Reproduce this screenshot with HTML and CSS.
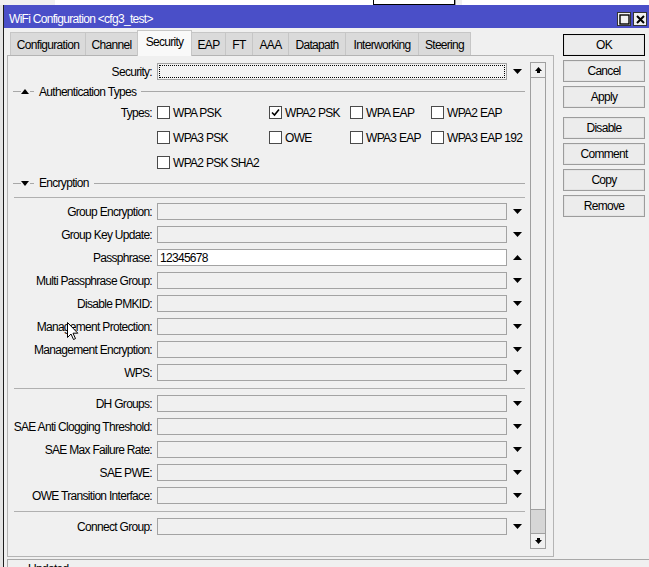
FILE: index.html
```html
<!DOCTYPE html>
<html>
<head>
<meta charset="utf-8">
<title>WiFi Configuration</title>
<link rel="stylesheet" href="styles.css">
</head>
<body>
<div class="topstrip">
  <div class="ts-gray"></div>
  <div class="ts-white"></div>
  <div class="ts-box"></div>
  <div class="ts-gray2"></div>
  <div class="ts-white2"></div>
</div>
<div class="desk">
  <div class="gutter"></div>
  <div class="window">
    <div class="titlebar">
      <span class="title">WiFi Configuration &lt;cfg3_test&gt;</span>
      <div class="tbtns">
        <span class="tbtn"><svg width="11" height="11" viewBox="0 0 11 11"><rect x="1" y="1" width="9" height="9" fill="none" stroke="#000" stroke-width="1.4"/></svg></span>
        <span class="tbtn"><svg width="11" height="11" viewBox="0 0 11 11"><path d="M2 2 L9 9 M9 2 L2 9" stroke="#000" stroke-width="2"/></svg></span>
      </div>
    </div>
    <div class="main">
      <div class="left">
        <div class="tabs">
          <div class="tab w-conf">Configuration</div>
          <div class="tab w-chan">Channel</div>
          <div class="tab active w-sec">Security</div>
          <div class="tab w-eap">EAP</div>
          <div class="tab w-ft">FT</div>
          <div class="tab w-aaa">AAA</div>
          <div class="tab w-dp">Datapath</div>
          <div class="tab w-iw">Interworking</div>
          <div class="tab w-st">Steering</div>
        </div>
        <div class="panel">
          <div class="content">
            <div class="row">
              <div class="label">Security:</div>
              <div class="field focus"><div class="dots"></div></div>
              <div class="arrow"><svg width="9" height="5" viewBox="0 0 9 5"><polygon points="0,0 9,0 4.5,5" fill="#000"/></svg></div>
            </div>

            <div class="sechead">
              <span class="hl-a"></span>
              <svg class="tri" width="8" height="5" viewBox="0 0 8 5"><polygon points="0,5 8,5 4,0" fill="#000"/></svg>
              <span class="hl-b"></span>
              <span class="htext">Authentication Types</span>
              <span class="hl-c"></span>
            </div>

            <div class="typesrow">
              <div class="label">Types:</div>
              <div class="checks">
                <label class="chk"><span class="box"></span>WPA PSK</label>
                <label class="chk"><span class="box"><svg width="9" height="9" viewBox="0 0 9 9"><path d="M1 4.5 L3.5 7 L8 1.5" fill="none" stroke="#000" stroke-width="1.6"/></svg></span>WPA2 PSK</label>
                <label class="chk"><span class="box"></span>WPA EAP</label>
                <label class="chk"><span class="box"></span>WPA2 EAP</label>
              </div>
            </div>
            <div class="typesrow">
              <div class="label"></div>
              <div class="checks">
                <label class="chk"><span class="box"></span>WPA3 PSK</label>
                <label class="chk"><span class="box"></span>OWE</label>
                <label class="chk"><span class="box"></span>WPA3 EAP</label>
                <label class="chk"><span class="box"></span>WPA3 EAP 192</label>
              </div>
            </div>
            <div class="typesrow">
              <div class="label"></div>
              <div class="checks">
                <label class="chk"><span class="box"></span>WPA2 PSK SHA2</label>
              </div>
            </div>

            <div class="sechead enc">
              <span class="hl-a"></span>
              <svg class="tri" width="8" height="5" viewBox="0 0 8 5"><polygon points="0,0 8,0 4,5" fill="#000"/></svg>
              <span class="hl-b"></span>
              <span class="htext">Encryption</span>
              <span class="hl-c"></span>
            </div>
            <div class="sep first"></div>

            <div class="row"><div class="label">Group Encryption:</div><div class="field"></div><div class="arrow"><svg width="9" height="5" viewBox="0 0 9 5"><polygon points="0,0 9,0 4.5,5" fill="#000"/></svg></div></div>
            <div class="row"><div class="label">Group Key Update:</div><div class="field"></div><div class="arrow"><svg width="9" height="5" viewBox="0 0 9 5"><polygon points="0,0 9,0 4.5,5" fill="#000"/></svg></div></div>
            <div class="row"><div class="label">Passphrase:</div><div class="field white">12345678</div><div class="arrow"><svg width="9" height="5" viewBox="0 0 9 5"><polygon points="0,5 9,5 4.5,0" fill="#000"/></svg></div></div>
            <div class="row"><div class="label">Multi Passphrase Group:</div><div class="field"></div><div class="arrow"><svg width="9" height="5" viewBox="0 0 9 5"><polygon points="0,0 9,0 4.5,5" fill="#000"/></svg></div></div>
            <div class="row"><div class="label">Disable PMKID:</div><div class="field"></div><div class="arrow"><svg width="9" height="5" viewBox="0 0 9 5"><polygon points="0,0 9,0 4.5,5" fill="#000"/></svg></div></div>
            <div class="row"><div class="label">Management Protection:</div><div class="field"></div><div class="arrow"><svg width="9" height="5" viewBox="0 0 9 5"><polygon points="0,0 9,0 4.5,5" fill="#000"/></svg></div></div>
            <div class="row"><div class="label">Management Encryption:</div><div class="field"></div><div class="arrow"><svg width="9" height="5" viewBox="0 0 9 5"><polygon points="0,0 9,0 4.5,5" fill="#000"/></svg></div></div>
            <div class="row"><div class="label">WPS:</div><div class="field"></div><div class="arrow"><svg width="9" height="5" viewBox="0 0 9 5"><polygon points="0,0 9,0 4.5,5" fill="#000"/></svg></div></div>
            <div class="sep"></div>
            <div class="row"><div class="label">DH Groups:</div><div class="field"></div><div class="arrow"><svg width="9" height="5" viewBox="0 0 9 5"><polygon points="0,0 9,0 4.5,5" fill="#000"/></svg></div></div>
            <div class="row"><div class="label">SAE Anti Clogging Threshold:</div><div class="field"></div><div class="arrow"><svg width="9" height="5" viewBox="0 0 9 5"><polygon points="0,0 9,0 4.5,5" fill="#000"/></svg></div></div>
            <div class="row"><div class="label">SAE Max Failure Rate:</div><div class="field"></div><div class="arrow"><svg width="9" height="5" viewBox="0 0 9 5"><polygon points="0,0 9,0 4.5,5" fill="#000"/></svg></div></div>
            <div class="row"><div class="label">SAE PWE:</div><div class="field"></div><div class="arrow"><svg width="9" height="5" viewBox="0 0 9 5"><polygon points="0,0 9,0 4.5,5" fill="#000"/></svg></div></div>
            <div class="row"><div class="label">OWE Transition Interface:</div><div class="field"></div><div class="arrow"><svg width="9" height="5" viewBox="0 0 9 5"><polygon points="0,0 9,0 4.5,5" fill="#000"/></svg></div></div>
            <div class="sep"></div>
            <div class="row"><div class="label">Connect Group:</div><div class="field"></div><div class="arrow"><svg width="9" height="5" viewBox="0 0 9 5"><polygon points="0,0 9,0 4.5,5" fill="#000"/></svg></div></div>
          </div>
          <div class="scroll">
            <div class="sbtn up"><svg width="7" height="6" viewBox="0 0 7 6"><polygon points="3.5,0 7,4 0,4" fill="#000"/><rect x="2" y="4" width="3" height="2" fill="#000"/></svg></div>
            <div class="track"></div>
            <div class="thumb"></div>
            <div class="sbtn down"><svg width="7" height="6" viewBox="0 0 7 6"><rect x="2" y="0" width="3" height="2" fill="#000"/><polygon points="0,2 7,2 3.5,6" fill="#000"/></svg></div>
          </div>
        </div>
      </div>
      <div class="btns">
        <div class="btn default">OK</div>
        <div class="btn">Cancel</div>
        <div class="btn">Apply</div>
        <div class="btn spaced">Disable</div>
        <div class="btn">Comment</div>
        <div class="btn">Copy</div>
        <div class="btn">Remove</div>
      </div>
    </div>
    <div class="status"><span>Updated</span></div>
  </div>
</div>
<svg class="cursor" width="12" height="19" viewBox="0 0 12 19"><path d="M0.5 0.5 L0.5 15.5 L4 12 L6.5 17.5 L8.5 16.6 L6 11.2 L10.8 11.2 Z" fill="#fff" stroke="#000" stroke-width="1" stroke-linejoin="round"/></svg>
</body>
</html>
```

FILE: styles.css
```css
* { box-sizing: border-box; }

body {
  margin: 0;
  width: 649px;
  height: 567px;
  overflow: hidden;
  position: relative;
  background: #f0f0f0;
  font-family: "Liberation Sans", Arial, sans-serif;
  font-size: 12px;
  letter-spacing: -0.7px;
  color: #000;
}

.topstrip { height: 5px; display: flex; }
.ts-gray { width: 55px; background: #f0f0f0; }
.ts-white { width: 318px; background: #fff; }
.ts-box { width: 82px; background: #fff; border: 1px solid #000; border-top: none; }
.ts-gray2 { width: 7px; background: #f0f0f0; border-left: 1px solid #999; }
.ts-white2 { flex: 1; background: #fff; }

.desk { display: flex; height: 562px; }
.gutter { width: 3px; background: #e4e4e4; }

.window {
  flex: 1;
  border-left: 1px solid #1e1e1e;
  background: #f0f0f0;
  display: flex;
  flex-direction: column;
  min-height: 0;
}

.titlebar {
  flex-shrink: 0;
  height: 23px;
  background: #4a4fc8;
  color: #fff;
  display: flex;
  align-items: center;
  padding-left: 5px;
}
.title { padding-top: 4px; }
.tbtns { margin-left: auto; margin-right: 2px; display: flex; gap: 2px; margin-top: 5px; }
.tbtn {
  width: 14px;
  height: 14px;
  background: #f0f0f0;
  border: 1px solid #333;
  display: flex;
  align-items: center;
  justify-content: center;
}

.main { flex-shrink: 0; display: flex; padding: 4px 0 0 3px; }
.left { width: 547px; display: flex; flex-direction: column; }

.tabs { display: flex; height: 23px; align-items: flex-end; padding-left: 3px; }
.tab {
  height: 23px;
  background: #dadada;
  border: 1px solid #c6c6c6;
  border-bottom: none;
  margin-right: -1px;
  display: flex;
  align-items: center;
  justify-content: center;
  padding-top: 1px;
}
.tab.active {
  height: 26px;
  margin-bottom: -1px;
  background: #f9f9f9;
  position: relative;
  z-index: 1;
  padding-top: 0;
  padding-bottom: 3px;
}
.w-conf { width: 76px; }
.w-chan { width: 53px; }
.w-sec { width: 55px; }
.w-eap { width: 35px; }
.w-ft { width: 28px; }
.w-aaa { width: 37px; }
.w-dp { width: 58px; }
.w-iw { width: 74px; }
.w-st { width: 53px; }

.panel {
  height: 502px;
  border: 1px solid #b4b4b4;
  display: flex;
}

.content { width: 522px; padding-top: 4px; }

.row { display: flex; align-items: center; height: 23px; }
.label { width: 144px; text-align: right; white-space: nowrap; }
.field {
  margin-left: 5px;
  width: 350px;
  height: 17px;
  border: 1px solid #a3a3a3;
  background: #f0f0f0;
  display: flex;
  align-items: center;
  padding-left: 2px;
}
.field.white { background: #fff; }
.field.focus { padding: 1px; background: #f3f3f3; }
.dots { width: 100%; height: 100%; border: 1px dotted #000; }
.arrow { width: 20px; display: flex; justify-content: center; align-items: center; }

.sechead { display: flex; align-items: center; height: 17px; }
.sechead.enc { height: 16px; }
.hl-a { width: 8px; height: 1px; background: #a8a8a8; margin-left: 5px; }
.tri { margin-left: 0; }
.hl-b { width: 4px; height: 1px; background: #a8a8a8; margin-left: 1px; }
.htext { margin-left: 5px; margin-right: 5px; }
.hl-c { flex: 1; height: 1px; background: #a8a8a8; margin-right: 5px; }

.typesrow { display: flex; align-items: center; height: 25px; }
.checks { margin-left: 5px; display: grid; grid-template-columns: 112px 81px 81px auto; }
.chk { display: flex; align-items: center; white-space: nowrap; }
.box {
  width: 13px;
  height: 13px;
  border: 1px solid #4a4a4a;
  background: #fff;
  margin-right: 3px;
  display: flex;
  align-items: center;
  justify-content: center;
}

.sep { height: 1px; background: #b0b0b0; margin: 4px 5px 3px 6px; }
.sep.first { margin-top: 6px; margin-bottom: 2px; }

.scroll {
  width: 16px;
  height: 487px;
  margin-top: 6px;
  border: 1px solid #a0a0a0;
  display: flex;
  flex-direction: column;
}
.sbtn { height: 15px; display: flex; align-items: center; justify-content: center; background: #f0f0f0; }
.sbtn.up { border-bottom: 1px solid #a0a0a0; }
.sbtn.down { border-top: 1px solid #a0a0a0; height: 15px; }
.track { flex: 1; background: #f0f0f0; }
.thumb { height: 24px; background: #d6d6d6; border-top: 1px solid #a0a0a0; }

.btns { width: 82px; margin-left: 9px; margin-top: 2px; display: flex; flex-direction: column; gap: 4px; }
.btn {
  height: 22px;
  border: 1px solid #9c9c9c;
  box-shadow: inset 0 0 0 1px #e4e4e4;
  background: #ececec;
  display: flex;
  align-items: center;
  justify-content: center;
}
.btn.default { border-color: #000; }
.btn.spaced { margin-top: 5px; }

.status {
  margin: 2px 0 0 3px;
  flex: 1;
  min-height: 0;
  overflow: hidden;
  border: 1px solid #a8a8a8;
  border-right: none;
  border-bottom: none;
  padding: 2px 0 0 20px;
  line-height: 14px;
}

.cursor { position: absolute; left: 67px; top: 322px; }
```
